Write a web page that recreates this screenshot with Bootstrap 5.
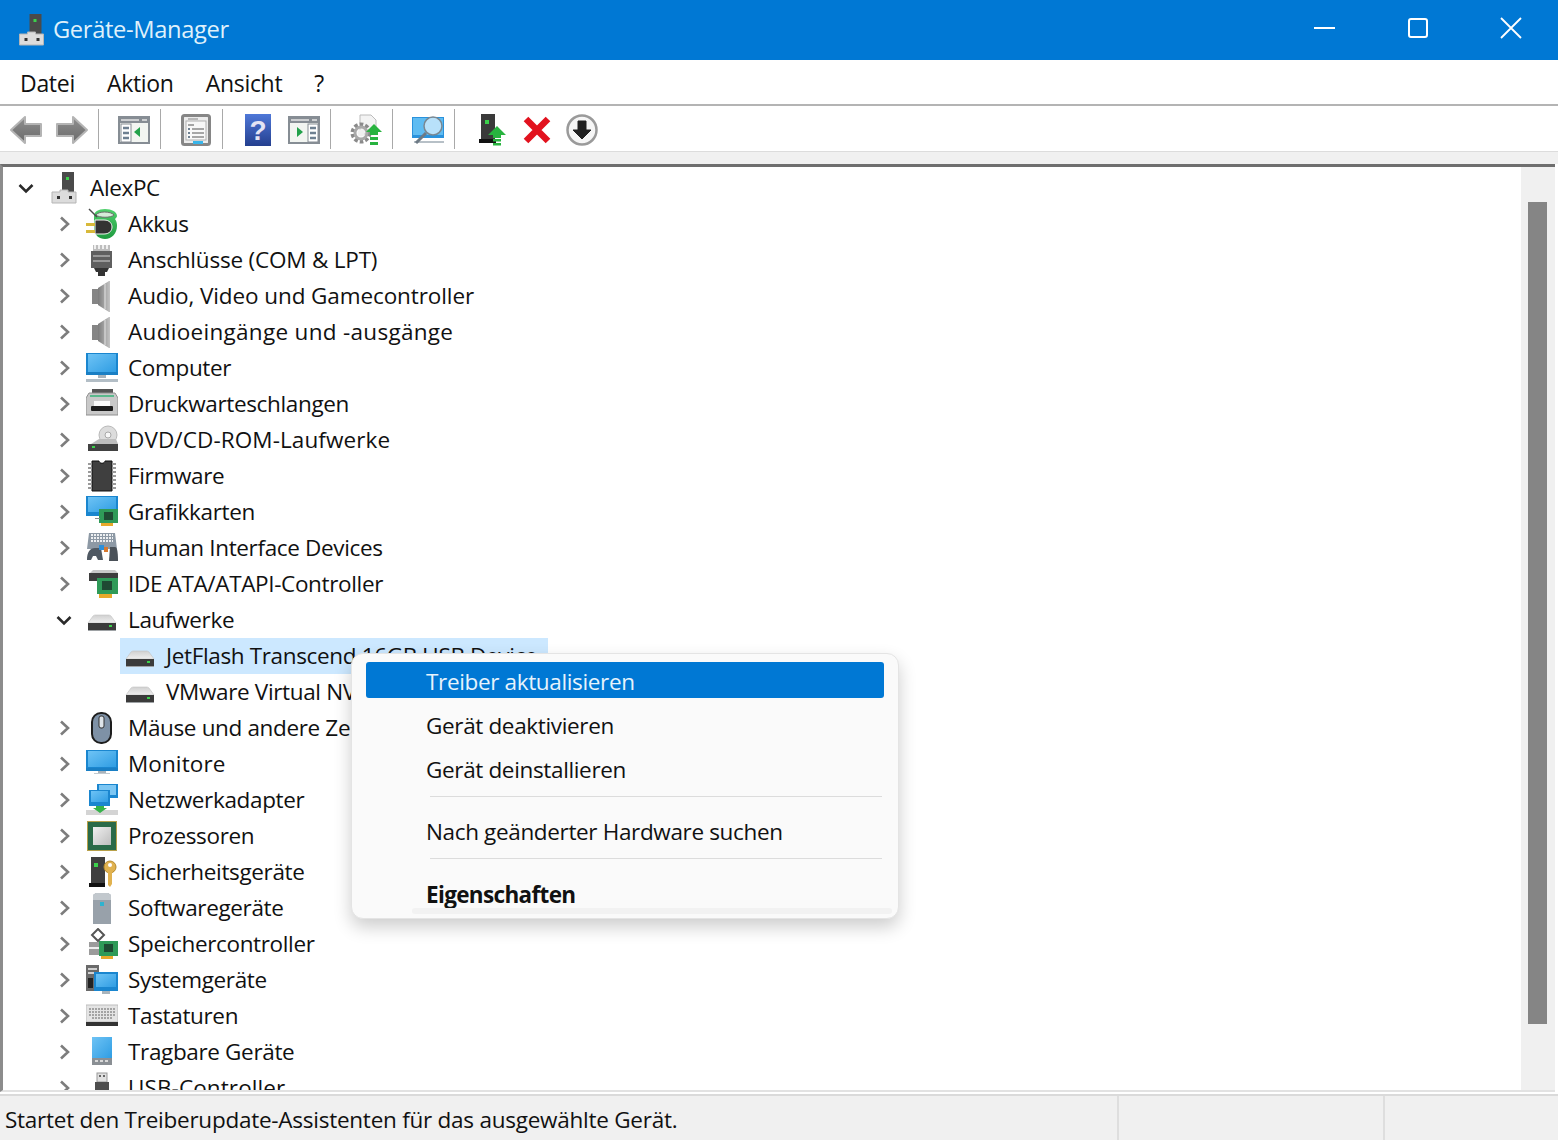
<!DOCTYPE html>
<html lang="de">
<head>
    <meta charset="UTF-8">
    <title>Geräte-Manager</title>
    <link href="https://cdn.jsdelivr.net/npm/bootstrap@5.3.0/dist/css/bootstrap.min.css" rel="stylesheet">
    <style>
        html, body { height: 100%; }
        body { font-family: "Open Sans", "Noto Sans", sans-serif; font-size: 22.5px; letter-spacing: -0.35px; color: #111; background: #fff; overflow: hidden; }
        .win { height: 1140px; }
        .title-bar { height: 60px; background: #0078d4; color: #dff0fb; padding-left: 18px; font-size: 23.7px; }
        .title-text { margin-left: 8px; }
        .win-btns { margin-left: auto; margin-right: 1px; margin-bottom: 4px; }
        .win-btn { width: 93px; height: 56px; }
        .menu-bar { height: 46px; border-bottom: 2px solid #b4b4b4; padding-top: 3px; font-size: 23px; padding-left: 7px; }
        .menu-entry { margin-left: 13px; margin-right: 20px; letter-spacing: -0.3px; }
        .menu-entry + .menu-entry { margin-left: 12px; }
        .tool-bar { height: 46px; border-bottom: 1px solid #dcdcdc; padding-left: 3px; padding-top: 3px; }
        .tool-btn { width: 46px; height: 36px; }
        .tool-btn.slim { width: 44px; }
        .tool-sep { width: 1px; height: 40px; background: #a9a9a9; margin: -3px 12px 0 3px; }
        .tool-sep.last { margin-right: 16px; }
        .gap-band { height: 12px; background: #f0f0f0; }
        .tree-frame { height: 928px; border-top: 3px solid #6e6e6e; border-left: 3px solid #8c8c8c; margin-right: 3px; border-bottom: 2px solid #e2e2e2; }
        .tree-view { padding-top: 3px; overflow: hidden; }
        .scroll-track { width: 34px; background: #f0f0f0; padding: 35px 8px 0 7px; }
        .scroll-thumb { height: 822px; background: #858585; }
        .tree-row { height: 36px; white-space: nowrap; }
        .lvl0 { padding-left: 15px; }
        .lvl1 { padding-left: 53px; }
        .lvl2 { padding-left: 121px; }
        .twist { width: 16px; flex: none; }
        .lvl0 .twist { margin-right: 17px; }
        .lvl1 .twist { margin-right: 14px; }
        .lvl0 .node-ico { width: 26px; margin-right: 13px; }
        .node-ico { width: 32px; height: 32px; flex: none; margin-right: 10px; }
        .picked { background: #cce8ff; width: 428px; margin-left: 117px; padding-left: 4px; }
        .track-a { letter-spacing: -0.2px; }
        .track-b { letter-spacing: -0.1px; }
        .track-c { letter-spacing: 0.1px; }
        .track-d { letter-spacing: 0.3px; }
        .status-bar { height: 46px; background: #f0f0f0; border-top: 2px solid #dadada; margin-top: 2px; }
        .status-text { width: 1117px; padding-left: 5px; padding-top: 7px; letter-spacing: -0.25px; }
        .status-cell { border-left: 2px solid #dedede; }
        .status-mid { width: 266px; }
        .status-end { width: 170px; }
        .ctx-menu.dropdown-menu { display: block; top: 653px; left: 351px; width: 548px; height: 266px; padding: 8px 14px; background: #fafafa; border: 1px solid #e4e4e4; border-radius: 12px; box-shadow: 0 8px 18px rgba(0,0,0,.2); font-size: inherit; color: #111; overflow: hidden; }
        .ctx-menu .dropdown-item { height: 36px; padding: 4px 0 0 60px; margin-bottom: 8px; display: flex; align-items: center; color: #111; border-radius: 3px; }
        .ctx-menu .dropdown-item.active { background: #0078d4; color: #e6f3fc; }
        .ctx-menu .dropdown-divider { margin: 10px 2px 15px 64px; border-color: #dcdcdc; opacity: 1; }
        .ctx-menu .strong-item { font-weight: 700; letter-spacing: -0.65px; padding-top: 6px; }
        .ctx-foot { position: absolute; left: 60px; right: 6px; bottom: 4px; height: 6px; background: #f2f2f2; border-radius: 3px; }
    </style>
</head>
<body>
<svg width="0" height="0" class="position-absolute">
    <defs>
        <linearGradient id="blueScreen" x1="0" y1="0" x2="1" y2="1"><stop offset="0" stop-color="#6ec3f5"/><stop offset="1" stop-color="#2f9de3"/></linearGradient>
        <linearGradient id="steel" x1="0" y1="0" x2="1" y2="0"><stop offset="0" stop-color="#7c7c7c"/><stop offset="1" stop-color="#c4c4c4"/></linearGradient>
        <linearGradient id="arrowGrey" x1="0" y1="0" x2="0" y2="1"><stop offset="0" stop-color="#8f8f8f"/><stop offset="1" stop-color="#6a6a6a"/></linearGradient>
        <linearGradient id="cpuFace" x1="0" y1="0" x2="1" y2="1"><stop offset="0" stop-color="#f0f0f0"/><stop offset="1" stop-color="#bdbdbd"/></linearGradient>
        <linearGradient id="driveTop" x1="0" y1="0" x2="0" y2="1"><stop offset="0" stop-color="#d0d0d0"/><stop offset="1" stop-color="#efefef"/></linearGradient>
        <linearGradient id="helpBlue" x1="0" y1="0" x2="0" y2="1"><stop offset="0" stop-color="#4f78d8"/><stop offset="1" stop-color="#243f8f"/></linearGradient>
        <linearGradient id="batteryGreen" x1="0" y1="0" x2="0" y2="1"><stop offset="0" stop-color="#4fd06c"/><stop offset="1" stop-color="#1f9a40"/></linearGradient>

        <symbol id="i-node" viewBox="0 0 26 32">
            <rect x="11" y="0" width="12" height="20" fill="#4a4a4a"/><rect x="15" y="5" width="3" height="3" fill="#3bd14b"/>
            <path d="M1 20h8v-2h8v2h8v11H1z" fill="#dcdcdc" stroke="#b5b5b5"/>
            <rect x="6" y="24" width="3" height="3" fill="#333"/><rect x="18" y="24" width="3" height="3" fill="#333"/>
        </symbol>
        <symbol id="i-battery" viewBox="0 0 32 32">
            <path d="M8 8c0-4 4-7 11-7s12 3 12 7c0 1-1 2-2 3 2 3 2 5 2 7 0 7-5 13-12 13-6 0-10-4-11-9z" fill="url(#batteryGreen)"/>
            <path d="M10 7c2-4 15-4 18 0-3 3-15 3-18 0z" fill="#d5ecd9" stroke="#6e6e6e"/>
            <path d="M3 1l8 8" stroke="#4a4a4a" stroke-width="1.500"/>
            <path d="M9 12h9c6 0 8 4 8 7s-2 7-8 7H9z" fill="#333" stroke="#f3f3f3"/>
            <rect x="0" y="15" width="9" height="3" fill="#d8b93a"/><rect x="0" y="22" width="9" height="3" fill="#d8b93a"/>
        </symbol>
        <symbol id="i-port" viewBox="0 0 32 32">
            <rect x="7" y="1" width="17" height="7" fill="#bdbdbd"/><path d="M9 1v4M13 1v4M17 1v4M21 1v4" stroke="#fff" stroke-width="1.500"/>
            <rect x="5" y="7" width="21" height="17" fill="#5f5f5f"/><rect x="7" y="11" width="17" height="2" fill="#999"/><rect x="7" y="16" width="17" height="2" fill="#999"/>
            <path d="M8 24h15l-2 4h-11z" fill="#333"/><rect x="12" y="27" width="7" height="5" fill="#333"/>
        </symbol>
        <symbol id="i-speaker" viewBox="0 0 32 32">
            <rect x="6" y="9" width="7" height="15" fill="#858585"/>
            <path d="M12 8l11-7h1v31h-1l-11-7z" fill="url(#steel)"/>
            <path d="M19 4v25" stroke="#e6e6e6"/>
        </symbol>
        <symbol id="i-monitor" viewBox="0 0 32 32">
            <rect x="0" y="1" width="32" height="22" fill="#1a86cf"/><rect x="2" y="2" width="28" height="18" fill="url(#blueScreen)"/>
            <rect x="0" y="20" width="32" height="3" fill="#1a7fc4"/>
            <rect x="12" y="23" width="8" height="3" fill="#a9b4bc"/><rect x="0" y="27" width="32" height="3" fill="#b3bec6"/>
        </symbol>
        <symbol id="i-monitor2" viewBox="0 0 32 32">
            <rect x="0" y="2" width="32" height="21" fill="#1a86cf"/><rect x="2" y="3" width="28" height="16" fill="url(#blueScreen)"/>
            <rect x="0" y="20" width="32" height="3" fill="#1a7fc4"/><rect x="12" y="23" width="8" height="2" fill="#a9b4bc"/><rect x="8" y="25" width="16" height="1" fill="#c2cad0"/>
        </symbol>
        <symbol id="i-printer" viewBox="0 0 32 32">
            <rect x="6" y="1" width="21" height="4" fill="#545454"/>
            <path d="M3 5h26l3 5v17H0V10z" fill="#c9c9c9" stroke="#8f8f8f"/>
            <rect x="4" y="7" width="24" height="2" fill="#5bb98d"/>
            <rect x="8" y="13" width="16" height="6" fill="#fafafa"/>
            <rect x="5" y="18" width="22" height="5" rx="1" fill="#1d1d1d"/>
        </symbol>
        <symbol id="i-dvd" viewBox="0 0 32 32">
            <circle cx="22" cy="11" r="9" fill="#dcdcdc" stroke="#b9b9b9"/><circle cx="22" cy="11" r="3" fill="#f7f7f7" stroke="#a8a8a8"/>
            <path d="M5 20l8-5h17l2 5z" fill="#bdbdbd"/><rect x="2" y="20" width="30" height="7" fill="#414141"/><rect x="6" y="22" width="3" height="2" fill="#3bd14b"/>
        </symbol>
        <symbol id="i-chip" viewBox="0 0 32 32">
            <path d="M6 1h7c0 3 6 3 6 0h7v30H6z" fill="#3f3f3f" stroke="#111"/>
            <path d="M2 4h4M2 8h4M2 12h4M2 16h4M2 20h4M2 24h4M2 28h4M26 4h4M26 8h4M26 12h4M26 16h4M26 20h4M26 24h4M26 28h4" stroke="#9a9a9a" stroke-width="2"/>
        </symbol>
        <symbol id="i-gpu" viewBox="0 0 32 32">
            <rect x="0" y="0" width="32" height="20" fill="#1a86cf"/><rect x="2" y="1" width="28" height="15" fill="url(#blueScreen)"/>
            <rect x="13" y="13" width="19" height="14" fill="#2f9a58"/><rect x="18" y="16" width="9" height="8" fill="#1f4a33"/>
            <rect x="15" y="27" width="12" height="3" fill="#e8a92b"/><rect x="9" y="22" width="5" height="1" fill="#8a8a8a"/>
        </symbol>
        <symbol id="i-hid" viewBox="0 0 32 32">
            <path d="M3 1h26l2 16H1z" fill="#8d99a5"/><path d="M5 3h22M5 6h22M5 9h22" stroke="#eef0f2" stroke-width="2" stroke-dasharray="2 1"/>
            <path d="M1 28c0-8 3-12 8-12h6l2 12h-5l-2-4H7l-2 4z" fill="#4f5963"/>
            <rect x="13" y="13" width="5" height="5" fill="#2f8fd8"/><rect x="18" y="15" width="4" height="5" fill="#d9792f"/>
            <path d="M24 15h5c2 0 3 4 3 14h-9z" fill="#4a5158"/>
        </symbol>
        <symbol id="i-ide" viewBox="0 0 32 32">
            <path d="M4 5l3-3h22l3 3z" fill="#c9c9c9"/><rect x="3" y="5" width="29" height="8" fill="#3d3d3d"/>
            <rect x="11" y="10" width="21" height="16" fill="#2f9a58"/><rect x="16" y="13" width="10" height="9" fill="#1f4a33"/>
            <rect x="13" y="26" width="13" height="4" fill="#e8a92b"/>
        </symbol>
        <symbol id="i-drive" viewBox="0 0 32 32">
            <path d="M2 19l5-7c1-1 2-1 3-1h12c1 0 2 0 3 1l5 7z" fill="url(#driveTop)" stroke="#c2c2c2" stroke-width=".6"/>
            <rect x="2" y="19" width="28" height="7" fill="#3b3b3b"/><rect x="23" y="21" width="3" height="2" fill="#3bd14b"/><rect x="2" y="26" width="28" height="1" fill="#9ea2a5"/>
        </symbol>
        <symbol id="i-mouse" viewBox="0 0 32 32">
            <rect x="6" y="1" width="19" height="30" rx="9" fill="#7e91a6" stroke="#1d1d1d" stroke-width="2"/>
            <rect x="13" y="4" width="5" height="12" rx="2" fill="#dfe5ea" stroke="#333"/>
        </symbol>
        <symbol id="i-net" viewBox="0 0 32 32">
            <rect x="11" y="0" width="21" height="14" fill="#1a86cf"/><rect x="13" y="1" width="17" height="10" fill="#7cc6f3"/>
            <rect x="3" y="6" width="21" height="16" fill="#1a86cf"/><rect x="5" y="7" width="17" height="11" fill="url(#blueScreen)"/>
            <rect x="0" y="26" width="32" height="5" fill="#d4d4d4"/>
            <path d="M10 22h8v2h3l-7 5-7-5h3z" fill="#36b24a"/>
        </symbol>
        <symbol id="i-cpu" viewBox="0 0 32 32">
            <rect x="1" y="1" width="30" height="30" fill="#b7a04a"/>
            <rect x="2" y="2" width="28" height="28" fill="#2a6a48"/>
            <rect x="7" y="7" width="18" height="18" fill="url(#cpuFace)"/>
        </symbol>
        <symbol id="i-sec" viewBox="0 0 32 32">
            <rect x="5" y="1" width="14" height="27" fill="#3f3f3f"/><rect x="8" y="7" width="4" height="4" fill="#3bd14b"/>
            <rect x="3" y="27" width="16" height="4" fill="#111"/>
            <circle cx="24" cy="11" r="6" fill="#e1b24f" stroke="#b68a2c"/><circle cx="24" cy="9" r="2" fill="#fff"/>
            <path d="M22 16h4v12l-2 3-2-2z" fill="#e1b24f"/>
        </symbol>
        <symbol id="i-soft" viewBox="0 0 32 32">
            <path d="M7 3l3-2h12l3 2v29H7z" fill="#98a1aa"/><path d="M7 3l3-2h12l3 2v5H7z" fill="#c2c8cd"/>
            <rect x="14" y="10" width="4" height="4" fill="#2fb3cf"/>
        </symbol>
        <symbol id="i-storage" viewBox="0 0 32 32">
            <path d="M12 1l6 6-6 6-6-6z" fill="#fff" stroke="#555" stroke-width="2"/>
            <rect x="3" y="14" width="16" height="13" fill="#9b9b9b"/><rect x="3" y="19" width="10" height="2" fill="#eee"/>
            <rect x="13" y="13" width="19" height="15" fill="#2f9a58"/><rect x="18" y="16" width="9" height="8" fill="#1f4a33"/>
            <rect x="15" y="28" width="12" height="3" fill="#e8a92b"/>
        </symbol>
        <symbol id="i-sys" viewBox="0 0 32 32">
            <rect x="0" y="1" width="13" height="26" fill="#6a6a6a"/><rect x="2" y="4" width="9" height="2" fill="#d0d0d0"/><rect x="2" y="8" width="9" height="2" fill="#d0d0d0"/><rect x="2" y="14" width="5" height="10" fill="#222"/>
            <rect x="8" y="8" width="24" height="19" fill="#1a86cf"/><rect x="10" y="10" width="20" height="13" fill="url(#blueScreen)"/>
            <rect x="16" y="27" width="8" height="3" fill="#a9b4bc"/>
        </symbol>
        <symbol id="i-kbd" viewBox="0 0 32 32">
            <rect x="0" y="5" width="32" height="17" fill="#e4e4e4" stroke="#bdbdbd"/>
            <path d="M3 9h26M3 12h26M3 15h26M6 18h20" stroke="#a3a3a3" stroke-width="2" stroke-dasharray="2 1"/>
            <rect x="0" y="22" width="32" height="4" fill="#333"/>
        </symbol>
        <symbol id="i-mobile" viewBox="0 0 32 32">
            <rect x="6" y="1" width="20" height="28" fill="#8a8f94"/><rect x="6" y="1" width="20" height="21" fill="url(#blueScreen)"/>
            <rect x="9" y="24" width="3" height="2" fill="#d8d8d8"/><rect x="14" y="24" width="3" height="2" fill="#d8d8d8"/><rect x="19" y="24" width="3" height="2" fill="#d8d8d8"/>
        </symbol>
        <symbol id="i-usb" viewBox="0 0 32 32">
            <rect x="11" y="1" width="10" height="9" fill="#e0e0e0" stroke="#999"/><rect x="13" y="3" width="2" height="2" fill="#666"/><rect x="17" y="3" width="2" height="2" fill="#666"/>
            <rect x="9" y="10" width="14" height="20" fill="#4e4e4e"/>
        </symbol>

        <symbol id="c-right" viewBox="0 0 16 16"><path d="M5 1.500l7 6.500-7 6.500" fill="none" stroke="#7d7d7d" stroke-width="2.600"/></symbol>
        <symbol id="c-down" viewBox="0 0 16 16"><path d="M1.500 5l6.500 6.500L14.500 5" fill="none" stroke="#2a2a2a" stroke-width="2.600"/></symbol>

        <symbol id="t-back" viewBox="0 0 34 30"><path d="M2 15L16 2v7h16v12H16v7z" fill="url(#arrowGrey)" stroke="#b4b4b4" stroke-width="2" stroke-linejoin="round"/></symbol>
        <symbol id="t-forward" viewBox="0 0 34 30"><path d="M32 15L18 2v7H2v12h16v7z" fill="url(#arrowGrey)" stroke="#b4b4b4" stroke-width="2" stroke-linejoin="round"/></symbol>
        <symbol id="t-pane" viewBox="0 0 32 28">
            <rect x="1" y="1" width="30" height="26" fill="#f2f5f1" stroke="#868d94" stroke-width="2"/><rect x="1" y="1" width="30" height="6" fill="#868d94"/>
            <path d="M3 4h18M24 4h5" stroke="#e5e5e5" stroke-width="1.500"/>
            <rect x="3" y="8" width="10" height="18" fill="#fff" stroke="#868d94"/>
            <path d="M5 12h6M5 17h6M5 22h6" stroke="#6e8091" stroke-width="2.500"/>
            <path d="M22 11v10l-6-5z" fill="#22a14a"/>
        </symbol>
        <symbol id="t-pane2" viewBox="0 0 32 28">
            <rect x="1" y="1" width="30" height="26" fill="#f2f5f1" stroke="#868d94" stroke-width="2"/><rect x="1" y="1" width="30" height="6" fill="#868d94"/>
            <path d="M3 4h18M24 4h5" stroke="#e5e5e5" stroke-width="1.500"/>
            <rect x="20" y="8" width="10" height="18" fill="#fff" stroke="#868d94"/>
            <path d="M22 12h6M22 17h6M22 22h6" stroke="#6e8091" stroke-width="2.500"/>
            <path d="M9 11v10l6-5z" fill="#22a14a"/>
        </symbol>
        <symbol id="t-props" viewBox="0 0 30 32">
            <rect x="1.500" y="1.500" width="27" height="29" rx="2" fill="#ececec" stroke="#868686" stroke-width="3"/>
            <rect x="5" y="7" width="20" height="19" fill="#f8f8f8" stroke="#b0b0b0"/>
            <path d="M7 5h10" stroke="#a8a8a8" stroke-width="1.500"/>
            <path d="M7 11h6" stroke="#8a8a8a" stroke-width="1.500"/>
            <path d="M7 15h2M7 19h2M7 23h2" stroke="#6e8091" stroke-width="2"/>
            <path d="M11 15h12M11 19h12M11 23h12" stroke="#8a8a8a" stroke-width="1.500"/>
            <rect x="12" y="27" width="10" height="3" fill="#38b5ea"/>
        </symbol>
        <symbol id="t-help" viewBox="0 0 26 32">
            <rect x="0" y="0" width="26" height="32" fill="url(#helpBlue)"/>
            <text x="13" y="26" text-anchor="middle" font-family="Liberation Sans, sans-serif" font-weight="700" font-size="28" fill="#e4e4f4">?</text>
        </symbol>
        <symbol id="t-gear" viewBox="0 0 32 32">
            <path d="M10 1h11l5 5v14H10z" fill="#f3f3f3" stroke="#bbb"/>
            <circle cx="11" cy="19" r="8.500" fill="none" stroke="#8a8a8a" stroke-width="4" stroke-dasharray="3.500 2"/>
            <circle cx="11" cy="19" r="6" fill="none" stroke="#a9a9a9" stroke-width="3"/>
            <circle cx="11" cy="19" r="3.500" fill="#f0f0f0"/>
            <path d="M24 10l8 8h-4v3h-8v-3h-4z" fill="#28b33f"/><rect x="20" y="23" width="8" height="3" fill="#28b33f"/><rect x="20" y="28" width="8" height="3" fill="#28b33f"/>
        </symbol>
        <symbol id="t-scan" viewBox="0 0 34 32">
            <rect x="1" y="3" width="32" height="21" fill="#2a92dc"/><rect x="2" y="4" width="30" height="17" fill="#5fbcf2"/>
            <rect x="3" y="27" width="30" height="2" fill="#b7c0c7"/>
            <circle cx="22" cy="12" r="9" fill="#d6eefc" fill-opacity=".75" stroke="#7a8892" stroke-width="1.500"/><path d="M15 19L5 29" stroke="#6d7a85" stroke-width="3"/>
        </symbol>
        <symbol id="t-update" viewBox="0 0 28 32">
            <rect x="2" y="0" width="14" height="26" fill="#3a3a3a"/><rect x="6" y="6" width="4" height="4" fill="#3bd14b"/>
            <rect x="0" y="25" width="17" height="4" fill="#111"/>
            <path d="M18 12l9 9h-5v3h-8v-3h-5z" fill="#28b33f"/><rect x="14" y="25" width="8" height="2.500" fill="#28b33f"/><rect x="14" y="29" width="8" height="2.500" fill="#28b33f"/>
        </symbol>
        <symbol id="t-remove" viewBox="0 0 28 28"><path d="M3 3l22 22M25 3L3 25" stroke="#e2121e" stroke-width="6.500"/></symbol>
        <symbol id="t-down" viewBox="0 0 32 32">
            <circle cx="16" cy="16" r="14.500" fill="#f6f6f6" stroke="#9a9a9a" stroke-width="2.500"/>
            <path d="M12 7h8v9h5l-9 9-9-9h5z" fill="#222" stroke="#222" stroke-linejoin="round"/>
        </symbol>
    </defs>
</svg>

<div class="win d-flex flex-column position-relative">
    <div class="title-bar d-flex align-items-center">
        <svg width="27" height="32"><use href="#i-node"/></svg>
        <span class="title-text">Geräte-Manager</span>
        <div class="win-btns d-flex">
            <div class="win-btn d-flex align-items-center justify-content-center"><svg width="22" height="22" viewBox="0 0 22 22"><path d="M0 11h21" stroke="#fff" stroke-width="2"/></svg></div>
            <div class="win-btn d-flex align-items-center justify-content-center"><svg width="22" height="22" viewBox="0 0 22 22"><rect x="2" y="2" width="18" height="18" rx="2" fill="none" stroke="#fff" stroke-width="2"/></svg></div>
            <div class="win-btn d-flex align-items-center justify-content-center"><svg width="22" height="22" viewBox="0 0 22 22"><path d="M1 1l20 20M21 1L1 21" stroke="#fff" stroke-width="1.800"/></svg></div>
        </div>
    </div>

    <div class="menu-bar d-flex align-items-center">
        <span class="menu-entry">Datei</span>
        <span class="menu-entry">Aktion</span>
        <span class="menu-entry">Ansicht</span>
        <span class="menu-entry">?</span>
    </div>

    <div class="tool-bar d-flex align-items-center">
        <div class="tool-btn d-flex align-items-center justify-content-center"><svg width="34" height="30"><use href="#t-back"/></svg></div>
        <div class="tool-btn d-flex align-items-center justify-content-center"><svg width="34" height="30"><use href="#t-forward"/></svg></div>
        <div class="tool-sep"></div>
        <div class="tool-btn d-flex align-items-center justify-content-center"><svg width="32" height="28"><use href="#t-pane"/></svg></div>
        <div class="tool-sep"></div>
        <div class="tool-btn d-flex align-items-center justify-content-center"><svg width="30" height="32"><use href="#t-props"/></svg></div>
        <div class="tool-sep"></div>
        <div class="tool-btn d-flex align-items-center justify-content-center"><svg width="26" height="32"><use href="#t-help"/></svg></div>
        <div class="tool-btn d-flex align-items-center justify-content-center"><svg width="32" height="28"><use href="#t-pane2"/></svg></div>
        <div class="tool-sep"></div>
        <div class="tool-btn d-flex align-items-center justify-content-center"><svg width="32" height="32"><use href="#t-gear"/></svg></div>
        <div class="tool-sep"></div>
        <div class="tool-btn d-flex align-items-center justify-content-center"><svg width="34" height="32"><use href="#t-scan"/></svg></div>
        <div class="tool-sep last"></div>
        <div class="tool-btn slim d-flex align-items-center justify-content-center"><svg width="28" height="32"><use href="#t-update"/></svg></div>
        <div class="tool-btn slim d-flex align-items-center justify-content-center"><svg width="28" height="28"><use href="#t-remove"/></svg></div>
        <div class="tool-btn d-flex align-items-center justify-content-center"><svg width="32" height="32"><use href="#t-down"/></svg></div>
    </div>

    <div class="gap-band"></div>

    <div class="tree-frame d-flex">
        <div class="tree-view flex-grow-1">
            <div class="tree-row lvl0 d-flex align-items-center"><svg class="twist" height="16"><use href="#c-down"/></svg><svg class="node-ico"><use href="#i-node"/></svg>AlexPC</div>
            <div class="tree-row lvl1 d-flex align-items-center"><svg class="twist" height="16"><use href="#c-right"/></svg><svg class="node-ico"><use href="#i-battery"/></svg>Akkus</div>
            <div class="tree-row lvl1 track-a d-flex align-items-center"><svg class="twist" height="16"><use href="#c-right"/></svg><svg class="node-ico"><use href="#i-port"/></svg>Anschlüsse (COM &amp; LPT)</div>
            <div class="tree-row lvl1 track-b d-flex align-items-center"><svg class="twist" height="16"><use href="#c-right"/></svg><svg class="node-ico"><use href="#i-speaker"/></svg>Audio, Video und Gamecontroller</div>
            <div class="tree-row lvl1 track-d d-flex align-items-center"><svg class="twist" height="16"><use href="#c-right"/></svg><svg class="node-ico"><use href="#i-speaker"/></svg>Audioeingänge und -ausgänge</div>
            <div class="tree-row lvl1 d-flex align-items-center"><svg class="twist" height="16"><use href="#c-right"/></svg><svg class="node-ico"><use href="#i-monitor"/></svg>Computer</div>
            <div class="tree-row lvl1 d-flex align-items-center"><svg class="twist" height="16"><use href="#c-right"/></svg><svg class="node-ico"><use href="#i-printer"/></svg>Druckwarteschlangen</div>
            <div class="tree-row lvl1 track-c d-flex align-items-center"><svg class="twist" height="16"><use href="#c-right"/></svg><svg class="node-ico"><use href="#i-dvd"/></svg>DVD/CD-ROM-Laufwerke</div>
            <div class="tree-row lvl1 d-flex align-items-center"><svg class="twist" height="16"><use href="#c-right"/></svg><svg class="node-ico"><use href="#i-chip"/></svg>Firmware</div>
            <div class="tree-row lvl1 d-flex align-items-center"><svg class="twist" height="16"><use href="#c-right"/></svg><svg class="node-ico"><use href="#i-gpu"/></svg>Grafikkarten</div>
            <div class="tree-row lvl1 d-flex align-items-center"><svg class="twist" height="16"><use href="#c-right"/></svg><svg class="node-ico"><use href="#i-hid"/></svg>Human Interface Devices</div>
            <div class="tree-row lvl1 d-flex align-items-center"><svg class="twist" height="16"><use href="#c-right"/></svg><svg class="node-ico"><use href="#i-ide"/></svg>IDE ATA/ATAPI-Controller</div>
            <div class="tree-row lvl1 d-flex align-items-center"><svg class="twist" height="16"><use href="#c-down"/></svg><svg class="node-ico"><use href="#i-drive"/></svg>Laufwerke</div>
            <div class="tree-row picked d-flex align-items-center"><svg class="node-ico"><use href="#i-drive"/></svg>JetFlash Transcend 16GB USB Device</div>
            <div class="tree-row lvl2 d-flex align-items-center"><svg class="node-ico"><use href="#i-drive"/></svg>VMware Virtual NVMe Disk</div>
            <div class="tree-row lvl1 d-flex align-items-center"><svg class="twist" height="16"><use href="#c-right"/></svg><svg class="node-ico"><use href="#i-mouse"/></svg>Mäuse und andere Zeigegeräte</div>
            <div class="tree-row lvl1 track-c d-flex align-items-center"><svg class="twist" height="16"><use href="#c-right"/></svg><svg class="node-ico"><use href="#i-monitor2"/></svg>Monitore</div>
            <div class="tree-row lvl1 d-flex align-items-center"><svg class="twist" height="16"><use href="#c-right"/></svg><svg class="node-ico"><use href="#i-net"/></svg>Netzwerkadapter</div>
            <div class="tree-row lvl1 d-flex align-items-center"><svg class="twist" height="16"><use href="#c-right"/></svg><svg class="node-ico"><use href="#i-cpu"/></svg>Prozessoren</div>
            <div class="tree-row lvl1 d-flex align-items-center"><svg class="twist" height="16"><use href="#c-right"/></svg><svg class="node-ico"><use href="#i-sec"/></svg>Sicherheitsgeräte</div>
            <div class="tree-row lvl1 d-flex align-items-center"><svg class="twist" height="16"><use href="#c-right"/></svg><svg class="node-ico"><use href="#i-soft"/></svg>Softwaregeräte</div>
            <div class="tree-row lvl1 d-flex align-items-center"><svg class="twist" height="16"><use href="#c-right"/></svg><svg class="node-ico"><use href="#i-storage"/></svg>Speichercontroller</div>
            <div class="tree-row lvl1 d-flex align-items-center"><svg class="twist" height="16"><use href="#c-right"/></svg><svg class="node-ico"><use href="#i-sys"/></svg>Systemgeräte</div>
            <div class="tree-row lvl1 d-flex align-items-center"><svg class="twist" height="16"><use href="#c-right"/></svg><svg class="node-ico"><use href="#i-kbd"/></svg>Tastaturen</div>
            <div class="tree-row lvl1 d-flex align-items-center"><svg class="twist" height="16"><use href="#c-right"/></svg><svg class="node-ico"><use href="#i-mobile"/></svg>Tragbare Geräte</div>
            <div class="tree-row lvl1 track-c d-flex align-items-center"><svg class="twist" height="16"><use href="#c-right"/></svg><svg class="node-ico"><use href="#i-usb"/></svg>USB-Controller</div>
        </div>
        <div class="scroll-track flex-shrink-0"><div class="scroll-thumb"></div></div>
    </div>

    <div class="status-bar d-flex">
        <div class="status-text text-nowrap">Startet den Treiberupdate-Assistenten für das ausgewählte Gerät.</div>
        <div class="status-cell status-mid"></div>
        <div class="status-cell status-end"></div>
    </div>

    <div class="dropdown-menu ctx-menu position-absolute">
        <a class="dropdown-item active" href="#">Treiber aktualisieren</a>
        <a class="dropdown-item" href="#">Gerät deaktivieren</a>
        <a class="dropdown-item" href="#">Gerät deinstallieren</a>
        <hr class="dropdown-divider">
        <a class="dropdown-item" href="#">Nach geänderter Hardware suchen</a>
        <hr class="dropdown-divider">
        <a class="dropdown-item strong-item" href="#">Eigenschaften</a>
        <div class="ctx-foot"></div>
    </div>
</div>
</body>
</html>
